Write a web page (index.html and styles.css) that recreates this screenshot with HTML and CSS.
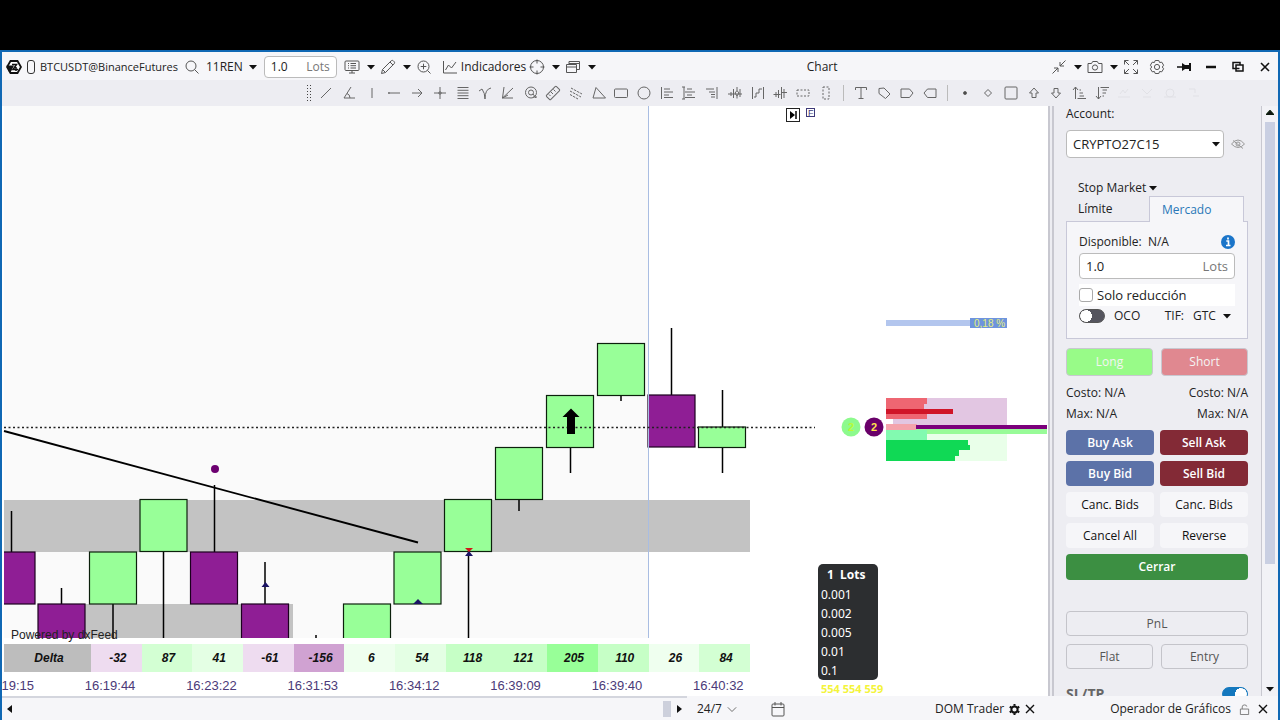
FILE: index.html
```html
<!DOCTYPE html>
<html lang="es">
<head>
  <meta charset="UTF-8" />
  <meta name="viewport" content="width=device-width, initial-scale=1" />
  <title>Chart - BTCUSDT@BinanceFutures</title>
  <link rel="stylesheet" href="styles.css">
</head>
<body>
  <svg class="defs" aria-hidden="true">
    <symbol id="caret" viewBox="0 0 8 5"><path d="M0 0h8L4 4.6z" fill="#111"/></symbol>
    <symbol id="close" viewBox="0 0 10 10"><path d="M1 1l8 8M9 1l-8 8" fill="none" stroke="#111" stroke-width="1.4"/></symbol>
  </svg>

  <div class="window">
    <header class="titlebar">
      <svg class="logo" viewBox="0 0 16 16"><path d="M4.500 2h7L15 8l-3.500 6h-7L1 8z" fill="#fff" stroke="#111" stroke-width="1.800"/><path d="M.5 6.500H8L4.500 13.500 3 13z" fill="#111"/><path d="M6 5.500h4.500L7 10.500h5M10 8v4" fill="none" stroke="#111" stroke-width="1.500"/></svg>
      <span class="link-pill"></span>
      <span class="symbol">BTCUSDT@BinanceFutures</span>
      <button class="icon-btn search" aria-label="Buscar"><svg viewBox="0 0 16 16"><circle cx="7" cy="7" r="5"/><path d="M10.500 10.500l4 4"/></svg></button>
      <button class="text-btn frame">11REN <svg class="caret"><use href="#caret"/></svg></button>
      <label class="lots-top"><input type="text" value="1.0" aria-label="Cantidad"><span>Lots</span></label>
      <div class="menus">
        <button class="icon-btn" aria-label="Plantillas"><svg viewBox="0 0 16 16"><rect x="1" y="2" width="14" height="9.500" rx="1"/><path d="M4 4.500h1M6.500 4.500H12M4 6.700h1M6.500 6.700H12M4 9h1M6.500 9H12M8 11.500V14M5 14h6"/></svg></button>
        <svg class="caret"><use href="#caret"/></svg>
        <button class="icon-btn" aria-label="Dibujo"><svg viewBox="0 0 16 16"><path d="M1.500 14.500l1-4L11.300 1.700q1-.8 2 .1l.9.9q.9 1 0 2L5.500 13.500zM10 3l3 3M2.500 10.500l3 3"/></svg></button>
        <svg class="caret"><use href="#caret"/></svg>
        <button class="icon-btn" aria-label="Ampliar"><svg viewBox="0 0 16 16"><circle cx="7.500" cy="7.500" r="5.500"/><path d="M11.500 11.500l3 3M4.700 7.500h5.600M7.500 4.700v5.600"/></svg></button>
      </div>
      <button class="text-btn indicators"><svg class="ico" viewBox="0 0 16 16"><path d="M1.500 2v12H15M3.500 11l3-5 3 3 4.500-6"/></svg>Indicadores</button>
      <div class="menus">
        <button class="icon-btn" aria-label="Objetivo"><svg viewBox="0 0 16 16"><circle cx="8" cy="8" r="6.500"/><path d="M8 .5v4M8 11.500v4M.5 8h4M11.500 8h4"/></svg></button>
        <svg class="caret"><use href="#caret"/></svg>
        <button class="icon-btn" aria-label="Ventanas"><svg viewBox="0 0 16 16"><path d="M1.500 5.500h10v8h-10zM1.500 8h10M4 5.500v-3h10.500v8h-3M4 4.500h10.500"/></svg></button>
        <svg class="caret"><use href="#caret"/></svg>
      </div>
      <h1 class="title">Chart</h1>
      <div class="menus">
        <button class="icon-btn" aria-label="Contraer"><svg viewBox="0 0 16 16"><path d="M14.500 1.500L9 7M9 3v4h4M1.500 14.500L7 9M3 9h4v4"/></svg></button>
        <svg class="caret"><use href="#caret"/></svg>
        <button class="icon-btn" aria-label="Captura"><svg viewBox="0 0 16 16"><path d="M1 4.500h3.500l1.200-2h4.600l1.200 2H15v9H1z"/><circle cx="8" cy="8.500" r="2.600"/></svg></button>
        <svg class="caret"><use href="#caret"/></svg>
        <button class="icon-btn" aria-label="Pantalla completa"><svg viewBox="0 0 16 16"><path d="M1.500 5.500v-4h4M1.500 1.500L6 6M10.500 1.500h4v4M14.500 1.500L10 6M1.500 10.500v4h4M1.500 14.500L6 10M10.500 14.500h4v-4M14.500 14.500L10 10"/></svg></button>
      </div>
      <div class="window-btns">
        <button class="icon-btn" aria-label="Ajustes"><svg viewBox="0 0 16 16"><path d="M6.200 1.500h3.600l.8 2 2.200-.3 1.800 3L13.300 8l1.300 1.800-1.800 3-2.200-.3-.8 2H6.200l-.8-2-2.200.3-1.800-3L2.700 8 1.400 6.200l1.800-3 2.200.3z"/><circle cx="8" cy="8" r="2.600"/></svg></button>
        <button class="icon-btn" aria-label="Fijar"><svg viewBox="0 0 16 16"><path d="M1 8h6" stroke="#111" stroke-width="1.500"/><path d="M6 4v8l3-2h4v2h2V4h-2v2H9z" fill="#111" stroke="none"/></svg></button>
        <button class="icon-btn" aria-label="Minimizar"><svg viewBox="0 0 16 16"><path d="M3 8h10" stroke="#111" stroke-width="2.500"/></svg></button>
        <button class="icon-btn" aria-label="Restaurar"><svg viewBox="0 0 16 16"><path d="M6 6h7v6H6zM9.500 9.500H3v-6h7V6" stroke="#111" stroke-width="1.500"/></svg></button>
        <button class="icon-btn" aria-label="Cerrar"><svg viewBox="0 0 16 16"><path d="M4 4l8 8M12 4l-8 8" stroke="#111" stroke-width="1.600"/></svg></button>
      </div>
    </header>

    <nav class="tools" aria-label="Herramientas de dibujo">
      <span class="grip"></span>
      <div class="tool-group lines">
        <button aria-label="Línea"><svg viewBox="0 0 16 16"><path d="M3 13L13 3"/></svg></button>
        <button aria-label="Ángulo"><svg viewBox="0 0 16 16"><path d="M10 2L3 13h11M6 8.500q3 1 3 4.500"/></svg></button>
        <button aria-label="Vertical"><svg viewBox="0 0 16 16"><path d="M8 3v10"/></svg></button>
        <button aria-label="Horizontal"><svg viewBox="0 0 16 16"><path d="M2 8h12M3 7v2"/></svg></button>
        <button aria-label="Rayo"><svg viewBox="0 0 16 16"><path d="M3 8h10M9 4l4 4-4 4"/></svg></button>
        <button aria-label="Cruz"><svg viewBox="0 0 16 16"><path d="M2 8h12M8 2v12M6.500 8L8 6.500 9.500 8 8 9.500z"/></svg></button>
        <button aria-label="Fibonacci"><svg viewBox="0 0 16 16"><path d="M2.500 2.500h11M2.500 5.300h11M2.500 8h11M2.500 10.700h11M2.500 13.500h11"/></svg></button>
        <button aria-label="Curva"><svg viewBox="0 0 16 16"><path d="M2 6l3-2q3 4 3 10Q8 4 14 3"/></svg></button>
        <button aria-label="Abanico"><svg viewBox="0 0 16 16"><path d="M4 2L2.500 13H13M2.500 13L13 3M2.500 13L8 10"/></svg></button>
        <button aria-label="Espiral"><svg viewBox="0 0 16 16"><circle cx="8" cy="7.500" r="5.500"/><circle cx="8" cy="7.500" r="2.500"/><path d="M10 12h4M10 9l3 4"/></svg></button>
        <button aria-label="Regla"><svg viewBox="0 0 16 16"><rect x="5" y="1" width="6" height="14" rx="1" transform="rotate(45 8 8)"/><path d="M6 7l2 2M8.500 4.500l2 2M4 9.500l1.500 1.500"/></svg></button>
        <button aria-label="Canal"><svg viewBox="0 0 16 16"><path d="M3 3l11 6M2 6l11 6M2 9.500l8 4.500" stroke-dasharray="2.500 1"/></svg></button>
        <button aria-label="Triángulo"><svg viewBox="0 0 16 16"><path d="M5 2.500L2 13h12.500z"/></svg></button>
        <button aria-label="Rectángulo"><svg viewBox="0 0 16 16"><rect x="1.500" y="4" width="13" height="8.500" rx="1"/></svg></button>
        <button aria-label="Elipse"><svg viewBox="0 0 16 16"><circle cx="8" cy="8" r="6"/></svg></button>
        <button aria-label="Perfil izquierdo"><svg viewBox="0 0 16 16"><path d="M2.500 2v12M5 4h6M5 7h9M5 10h5M5 12.500h9"/></svg></button>
        <button aria-label="Perfil medio"><svg viewBox="0 0 16 16"><path d="M3 2v12M1 2h3M1 14h3M6 4h5M4 7h10M6 10h5M4 12.500h10"/></svg></button>
        <button aria-label="Perfil derecho"><svg viewBox="0 0 16 16"><path d="M13 2v12M2 4h8M5 7h6M7 9.500h4M7 12h4"/></svg></button>
        <button aria-label="Velas"><svg viewBox="0 0 16 16"><path d="M1 9h14M4 7v4M6.500 4v9M10 2v3.500M10 11v2.500M10 5.500L8 8l2 3 2-3zM13 4v8"/></svg></button>
        <button aria-label="Escalera"><svg viewBox="0 0 16 16"><path d="M2.500 2v12M13.500 2v12M4 12h2V8h3V4h3"/></svg></button>
        <button aria-label="Delta"><svg viewBox="0 0 16 16"><path d="M1.500 9.500h7M4 7v5M6.500 5v8M9.500 2v12M12 4v9M9.500 7.500H15"/></svg></button>
        <button aria-label="Zona horizontal"><svg viewBox="0 0 16 16"><rect x="2" y="5" width="12" height="6" stroke-dasharray="2 1.500"/></svg></button>
        <button aria-label="Zona vertical"><svg viewBox="0 0 16 16"><rect x="5" y="2" width="6" height="12" stroke-dasharray="2 1.500"/></svg></button>
      </div>
      <span class="sep"></span>
      <div class="tool-group labels">
        <button aria-label="Texto"><svg viewBox="0 0 16 16"><path d="M2.500 5V2.500h11V5M8 2.500v11M5.500 13.500h5"/></svg></button>
        <button aria-label="Etiqueta"><svg viewBox="0 0 16 16"><path d="M3 3.500l5-.5 6 6-4.500 4.500L3 8.500z"/></svg></button>
        <button aria-label="Etiqueta derecha"><svg viewBox="0 0 16 16"><path d="M2 4h8.500L14 8l-3.500 4.500H2z"/></svg></button>
        <button aria-label="Etiqueta izquierda"><svg viewBox="0 0 16 16"><path d="M14 4H5.500L2 8l3.500 4.500H14z"/></svg></button>
      </div>
      <span class="sep"></span>
      <div class="tool-group marks">
        <button aria-label="Punto"><svg viewBox="0 0 16 16"><circle cx="8" cy="8" r="1.500" fill="#444"/></svg></button>
        <button aria-label="Rombo"><svg viewBox="0 0 16 16"><path d="M8 4.500L11.500 8 8 11.500 4.500 8z"/></svg></button>
        <button aria-label="Cuadrado"><svg viewBox="0 0 16 16"><rect x="2" y="2" width="12" height="12" rx="1"/></svg></button>
        <button aria-label="Flecha arriba"><svg viewBox="0 0 16 16"><path d="M8 3l4.500 5H10v4.500H6V8H3.500z"/></svg></button>
        <button aria-label="Flecha abajo"><svg viewBox="0 0 16 16"><path d="M8 13l4.500-5H10V3.500H6V8H3.500z"/></svg></button>
        <button aria-label="Orden ascendente"><svg viewBox="0 0 16 16"><path d="M4.500 14V2M2 5l2.500-3L7 5M8.500 5H10M8.500 8H12M8.500 11H13M6.500 13.500H15"/></svg></button>
        <button aria-label="Orden descendente"><svg viewBox="0 0 16 16"><path d="M4.500 2v12M2 11l2.500 3L7 11M6.500 2.500H15M8.500 5H13M8.500 8H12M8.500 11H10"/></svg></button>
        <button disabled aria-label="Cortar"><svg viewBox="0 0 16 16"><path d="M2 12h12M4 9l3-4 2 3 3-4"/></svg></button>
        <button disabled aria-label="Copiar"><svg viewBox="0 0 16 16"><path d="M3 4l5 5 5-5M4 12h8"/></svg></button>
        <button disabled aria-label="Ocultar"><svg viewBox="0 0 16 16"><circle cx="8" cy="8" r="4"/><path d="M2 12h12"/></svg></button>
        <button disabled aria-label="Borrar"><svg viewBox="0 0 16 16"><path d="M4 4h6v4M8 11h6"/></svg></button>
      </div>
    </nav>

    <main class="workspace">
      <section class="chart" aria-label="Gráfico">
        <svg class="plot" viewBox="2 106 1046 532" preserveAspectRatio="xMinYMin meet">
          <defs><clipPath id="area"><rect x="2" y="106" width="1046" height="532"/></clipPath></defs>
          <rect x="2" y="106" width="646" height="532" fill="#fafafa"/>
          <g clip-path="url(#area)">
            <!-- zones -->
            <rect x="4" y="500" width="746" height="52" fill="#c3c3c3"/>
            <rect x="40" y="604" width="253" height="40" fill="#c3c3c3"/>
            <!-- wicks -->
            <path class="wick" d="M11.500 511v41M61.500 588v16M113 604v40M163.500 552v92M214.500 485v67M265 562v42M316 635v9M468.500 552v92M519 499v12M570.500 447v26M621 395v6M671.500 328v67M722.500 390v83"/>
            <!-- candles -->
            <g class="down">
              <rect x="-12" y="552" width="47" height="52"/>
              <rect x="38" y="604" width="47" height="52"/>
              <rect x="190.500" y="552" width="47" height="52"/>
              <rect x="241.500" y="604" width="47" height="52"/>
              <rect x="648" y="395" width="47" height="52"/>
            </g>
            <g class="up">
              <rect x="89.500" y="552" width="47" height="52"/>
              <rect x="140" y="499.500" width="47" height="52"/>
              <rect x="343.500" y="604" width="47" height="52"/>
              <rect x="394" y="552" width="47" height="52"/>
              <rect x="444.500" y="499.500" width="47" height="52"/>
              <rect x="495.500" y="447.500" width="47" height="52"/>
              <rect x="546.500" y="395.500" width="47" height="52"/>
              <rect x="597.500" y="343.500" width="47" height="52"/>
              <rect x="698.500" y="427" width="47" height="20.500"/>
            </g>
            <rect x="2" y="106" width="2" height="532" fill="#fff"/>
            <path d="M648.500 106v532" stroke="#a9bde2"/>
            <path d="M4 431L418 542.500" stroke="#000" stroke-width="1.900"/>
            <circle cx="215" cy="469" r="4" fill="#6c0070"/>
            <path d="M4 427.500h811" stroke="#222" stroke-width="1.300" stroke-dasharray="2 2.500"/>
            <path d="M571 408.500l8.500 8.500h-4.500v17h-8v-17h-4.500z" fill="#000"/>
            <path d="M265.500 582l4 5h-8zM418 599l5 5h-10zM469 551l4 5h-8z" fill="#1b1464"/>
            <path d="M465 548h8l-4 4z" fill="#d01818"/>
          </g>
          <!-- go to last bar -->
          <rect x="786.500" y="108.500" width="13" height="13" fill="#fff" stroke="#222"/>
          <path d="M790 111v8l5-4z" fill="#000"/><path d="M796 111v8" stroke="#000" stroke-width="1.500"/>
          <rect x="806.500" y="108.500" width="8" height="8" fill="#fff" stroke="#3f3a78"/>
          <text x="808" y="116" font-size="9" fill="#3f3a78">F</text>
          <!-- market depth -->
          <rect x="886" y="320" width="84" height="6" fill="#b3c6ee"/>
          <rect x="970" y="318" width="37" height="10" fill="#6e94dd"/>
          <text x="974" y="327" font-size="10" fill="#e4f07a">0,18 %</text>
          <rect x="886" y="398" width="121" height="31" fill="#e2c6e2"/>
          <rect x="886" y="430" width="121" height="31" fill="#e9ffe9"/>
          <path d="M886 398h41v6h-3v5h3v10h-41z" fill="#ee6672"/>
          <rect x="886" y="409" width="67" height="5" fill="#d01528"/>
          <rect x="886" y="419" width="7" height="5" fill="#fff"/>
          <rect x="886" y="424" width="31" height="6" fill="#f4a3ab"/>
          <rect x="916" y="425" width="131" height="4" fill="#7b007b"/>
          <rect x="916" y="429" width="131" height="5" fill="#98fb98"/>
          <rect x="886" y="430" width="41" height="10" fill="#82fab0"/>
          <path d="M886 440h82v5h2v5h-11v6h-4v5h-69z" fill="#10d955"/>
          <circle cx="851" cy="427" r="9.500" fill="#8dfa8d"/>
          <circle cx="874" cy="427" r="9.500" fill="#690069"/>
          <text class="badge" x="851" y="431" fill="#b8fa38">2</text>
          <text class="badge" x="874" y="431" fill="#ffe34d">2</text>
          <text x="11" y="639" font-size="12" fill="#222">Powered by dxFeed</text>
        </svg>

        <table class="delta">
          <tr>
            <th>Delta</th>
            <td class="n1">-32</td><td class="p3">87</td><td class="p2">41</td><td class="n1">-61</td>
            <td class="n2">-156</td><td class="p1">6</td><td class="p2">54</td><td class="p4">118</td>
            <td class="p4">121</td><td class="p5">205</td><td class="p4">110</td><td class="p1">26</td><td class="p3">84</td>
          </tr>
        </table>
        <div class="times">
          <div class="times-row">
            <span>16:19:15</span><span>16:19:44</span><span>16:23:22</span><span>16:31:53</span>
            <span>16:34:12</span><span>16:39:09</span><span>16:39:40</span><span>16:40:32</span>
          </div>
        </div>

        <div class="lots-menu">
          <strong>1 &nbsp;Lots</strong>
          <button>0.001</button>
          <button>0.002</button>
          <button>0.005</button>
          <button>0.01</button>
          <button>0.1</button>
          <span class="dom-nums">554 554 559</span>
        </div>
      </section>

      <aside class="trader">
        <label class="account-label" for="account">Account:</label>
        <div class="account">
          <span class="select-wrap"><select id="account"><option>CRYPTO27C15</option></select><svg class="caret"><use href="#caret"/></svg></span>
          <button class="icon-btn eye" aria-label="Ocultar cuenta"><svg viewBox="0 0 16 16"><path d="M1.500 8Q8 0 14.500 8 8 15 1.500 8zM3 4.500l10 8"/><circle cx="8" cy="8" r="2"/></svg></button>
        </div>

        <button class="stop-type">Stop Market <svg class="caret"><use href="#caret"/></svg></button>
        <div class="tabs">
          <button>Límite</button>
          <button class="active">Mercado</button>
        </div>
        <div class="order-box">
          <div class="line available"><span>Disponible: &nbsp;N/A</span><svg class="info" viewBox="0 0 14 14"><circle cx="7" cy="7" r="7" fill="#1b75c9"/><path d="M7 2.500v2M5.300 6H7.500v4.500M5 10.500h4.500" stroke="#fff" stroke-width="1.700" fill="none"/></svg></div>
          <label class="lots-box"><input type="text" value="1.0" aria-label="Lots"><span>Lots</span></label>
          <label class="reduce"><input type="checkbox">Solo reducción</label>
          <div class="line options">
            <label class="oco"><input class="switch" type="checkbox">OCO</label>
            <label class="tif">TIF: <span class="select-wrap"><select><option>GTC</option></select><svg class="caret"><use href="#caret"/></svg></span></label>
          </div>
        </div>

        <div class="pair wide">
          <button class="btn long">Long</button>
          <button class="btn short">Short</button>
        </div>
        <div class="line costs"><span>Costo: N/A</span><span>Costo: N/A</span></div>
        <div class="line costs"><span>Max: N/A</span><span>Max: N/A</span></div>
        <div class="pair actions">
          <button class="btn buy">Buy Ask</button>
          <button class="btn sell">Sell Ask</button>
          <button class="btn buy">Buy Bid</button>
          <button class="btn sell">Sell Bid</button>
          <button class="btn plain">Canc. Bids</button>
          <button class="btn plain">Canc. Bids</button>
          <button class="btn plain">Cancel All</button>
          <button class="btn plain">Reverse</button>
        </div>
        <button class="btn close-all">Cerrar</button>

        <div class="pair wide position">
          <button class="btn outline pnl">PnL</button>
          <button class="btn outline">Flat</button>
          <button class="btn outline">Entry</button>
        </div>
        <label class="line sltp"><span>SL/TP</span><input class="switch" type="checkbox" checked></label>
      </aside>

      <div class="scrollbar">
        <svg class="caret up"><use href="#caret"/></svg>
        <span class="thumb"></span>
        <svg class="caret"><use href="#caret"/></svg>
      </div>
    </main>

    <footer class="status">
      <div class="hscroll">
        <svg class="arrow" viewBox="0 0 5 8"><path d="M5 0v8L0 4z"/></svg>
        <span class="hthumb"></span>
        <svg class="arrow" viewBox="0 0 5 8"><path d="M0 0v8l5-4z"/></svg>
      </div>
      <button class="text-btn session">24/7 <svg class="ico" viewBox="0 0 12 12"><path d="M1 4l5 5 5-5"/></svg></button>
      <button class="icon-btn calendar" aria-label="Calendario"><svg viewBox="0 0 16 16"><rect x="2" y="3" width="12" height="12" rx="1"/><path d="M2 6.500h12M5 1v3.500M11 1v3.500"/></svg></button>
      <div class="dock dom">DOM Trader
        <svg class="gear" viewBox="0 0 12 12"><circle cx="6" cy="6" r="3.400" fill="none" stroke="#111" stroke-width="2.200"/><path d="M6 0v2M6 10v2M.8 3l1.800 1M9.400 8l1.800 1M.8 9l1.800-1M9.400 4l1.800-1" stroke="#111" stroke-width="2.200"/></svg>
        <button class="icon-btn small" aria-label="Cerrar DOM"><svg><use href="#close"/></svg></button>
      </div>
      <div class="dock operator">Operador de Gráficos
        <svg class="lock" viewBox="0 0 12 12"><path d="M1.500 5.500h9v6h-9zM3.500 5.500V3.200q0-2.200 2.500-2.200t2.500 1.800" fill="none" stroke="#777"/></svg>
        <button class="icon-btn small" aria-label="Cerrar panel"><svg><use href="#close"/></svg></button>
      </div>
    </footer>
  </div>
</body>
</html>
```

FILE: styles.css
```css
* { box-sizing: border-box; }
body {
  margin: 0;
  height: 100vh;
  padding-top: 50px;
  background: #000;
  color: #222;
  font: 12px/16px "Open Sans", "Segoe UI", sans-serif;
  display: flex;
  flex-direction: column;
  overflow: hidden;
}
button, input, select {
  font: inherit;
  color: inherit;
  background: none;
  border: none;
  padding: 0;
  margin: 0;
}
button { cursor: pointer; }
.defs { display: none; }
.window {
  flex: 1;
  min-height: 0;
  display: flex;
  flex-direction: column;
  border: 2px solid #1068b4;
  border-bottom: none;
  background: #f6f6f9;
}
.caret { width: 8px; height: 5px; flex: none; }

/* title bar */
.titlebar {
  height: 28px;
  flex: none;
  display: flex;
  align-items: center;
  padding: 2px 5px 0 4px;
}
.icon-btn {
  width: 16px;
  height: 16px;
  flex: none;
  display: flex;
}
.icon-btn svg, .ico {
  width: 16px;
  height: 16px;
  fill: none;
  stroke: #555;
  stroke-width: 1;
}
.logo { width: 16px; height: 16px; }
.link-pill {
  width: 8px;
  height: 14px;
  margin: 0 5px;
  border: 1px solid #333;
  border-radius: 3px;
}
.symbol { font-size: 11px; }
.search { margin: 0 6px; }
.text-btn { display: flex; align-items: center; }
.frame { gap: 6px; }
.lots-top {
  width: 73px;
  height: 22px;
  margin: 0 7px;
  padding: 0 6px;
  display: flex;
  align-items: center;
  justify-content: space-between;
  background: #fff;
  border: 1px solid #bbb;
  border-radius: 4px;
}
.lots-top input { width: 30px; }
.lots-top span, .lots-box span { color: #777; }
.menus { display: flex; align-items: center; }
.menus .caret { margin: 0 5px 0 7px; }
.indicators { margin: 0 3px 0 5px; gap: 3px; }
.menus + .indicators { margin-left: 10px; }
.title {
  flex: 1;
  margin: 0;
  padding-right: 8px;
  font-size: 12px;
  font-weight: 400;
  text-align: center;
}
.window-btns { display: flex; gap: 11px; margin-left: 10px; }

/* drawing tools */
.tools {
  height: 26px;
  flex: none;
  display: flex;
  align-items: center;
  padding-left: 304px;
  background: #ededf2;
}
.grip {
  width: 6px;
  height: 18px;
  margin-right: 3px;
  background: radial-gradient(circle, #444 1px, transparent 1px) 0 0 / 3px 3px;
}
.tool-group {
  display: grid;
  grid-auto-flow: column;
  grid-auto-columns: 1fr;
}
.lines { width: 522px; }
.labels { width: 91px; }
.marks { width: 250px; }
.tool-group button { display: flex; justify-content: center; }
.tool-group svg {
  width: 16px;
  height: 16px;
  fill: none;
  stroke: #666;
}
.tool-group button:disabled { opacity: .08; }
.sep { width: 1px; height: 16px; margin: 0 6px; background: #bbb; }

/* chart */
.workspace { flex: 1; min-height: 0; display: flex; }
.chart {
  flex: 1;
  min-width: 0;
  position: relative;
  display: flex;
  flex-direction: column;
  background: #fff;
  font-family: "Liberation Sans", Arial, sans-serif;
}
.plot {
  width: 100%;
  flex: 1;
  min-height: 0;
  overflow: visible;
}
.wick { stroke: #000; stroke-width: 1.5; }
.down { fill: #8f1e95; stroke: #1c001e; stroke-width: 1.2; }
.up { fill: #98ff98; stroke: #0c200c; stroke-width: 1.2; }
.badge { font-size: 11px; font-weight: 700; text-anchor: middle; }
.delta {
  width: 746px;
  height: 28px;
  margin: 6px 0 0 2px;
  table-layout: fixed;
  border-collapse: collapse;
  font-style: italic;
  font-weight: 700;
  color: #111;
}
.delta td, .delta th { padding: 0 0 0 3px; text-align: center; }
.delta th { width: 87px; background: #bdbdbd; }
.n1 { background: #eedcf0; }
.n2 { background: #d0a2d2; }
.p1 { background: #efffef; }
.p2 { background: #e4ffe4; }
.p3 { background: #d3ffd3; }
.p4 { background: #c6ffc6; }
.p5 { background: #98ff98; }
.times { height: 24px; overflow: hidden; }
.times-row {
  width: 811px;
  margin-left: -44px;
  display: grid;
  grid-template-columns: repeat(8, 1fr);
  line-height: 28px;
  font-size: 13px;
  text-align: center;
  color: #4b3a78;
}
.lots-menu {
  position: absolute;
  left: 816px;
  bottom: 16px;
  width: 60px;
  height: 116px;
  padding-left: 3px;
  display: flex;
  flex-direction: column;
  border-radius: 5px;
  background: #2c2e30;
  color: #fff;
  font: 12px/19px "Noto Sans", "Segoe UI", sans-serif;
}
.lots-menu strong { padding-left: 6px; line-height: 21px; }
.lots-menu button { height: 19px; flex: none; text-align: left; }
.dom-nums {
  color: #f4f43a;
  font-size: 11px;
  font-weight: 700;
  line-height: 18px;
  white-space: nowrap;
}

/* order panel */
.trader {
  width: 214px;
  flex: none;
  padding: 0 13px 0 12px;
  overflow: hidden;
  background: #ededf2;
  border-left: 6px double #c8c8d0;
  border-right: 1px solid #c8c8d0;
}
.account-label { display: block; height: 24px; line-height: 15px; }
.account { display: flex; align-items: center; gap: 6px; }
.eye svg { stroke: #999; }
.select-wrap { position: relative; display: flex; align-items: center; }
.select-wrap select { appearance: none; width: 100%; }
.select-wrap .caret { position: absolute; right: 4px; pointer-events: none; }
.account .select-wrap { width: 158px; }
.account select {
  height: 28px;
  padding: 0 6px;
  font-size: 13px;
  background: #fff;
  border: 1px solid #bbb;
  border-radius: 4px;
}
.stop-type {
  display: flex;
  align-items: center;
  gap: 3px;
  margin: 22px 0 0 12px;
}
.tabs { display: flex; position: relative; padding-right: 4px; height: 25px; }
.tabs button {
  width: 83px;
  padding-left: 12px;
  text-align: left;
}
.tabs .active {
  flex: 1;
  margin-bottom: -1px;
  color: #2a78b8;
  background: #f6f6f9;
  border: 1px solid #c8c8d8;
  border-bottom: none;
}
.order-box {
  height: 118px;
  padding: 12px 12px 0;
  background: #f6f6f9;
  border: 1px solid #c8c8d8;
}
.line { display: flex; justify-content: space-between; align-items: center; }
.info { width: 14px; height: 14px; }
.lots-box {
  height: 26px;
  margin-top: 3px;
  padding: 0 6px;
  display: flex;
  align-items: center;
  justify-content: space-between;
  font-size: 13px;
  background: #fff;
  border: 1px solid #bbb;
  border-radius: 4px;
}
.lots-box input { width: 80px; }
.reduce {
  height: 22px;
  margin-top: 5px;
  display: flex;
  align-items: center;
  gap: 4px;
  font-size: 13px;
  background: #fff;
}
.reduce input {
  appearance: none;
  width: 14px;
  height: 14px;
  border: 1px solid #aaa;
  border-radius: 3px;
}
.options { height: 20px; }
.oco, .tif { display: flex; align-items: center; gap: 9px; }
.tif select { width: 42px; }
.switch {
  appearance: none;
  width: 26px;
  height: 14px;
  border-radius: 7px;
  border: 1px solid #555;
  background: radial-gradient(circle at 6px 6px, #fff 6px, #55555f 6px);
}
.switch:checked {
  border-color: #1478be;
  background: radial-gradient(circle at 18px 6px, #fff 6px, #1478be 6px);
}
.pair {
  display: grid;
  grid-template-columns: 1fr 1fr;
  gap: 6px;
}
.wide { column-gap: 8px; margin-top: 9px; }
.btn { height: 25px; border-radius: 4px; }
.long, .short { height: 28px; color: #f4f4f4; border: 1px solid #c8c8d0; }
.long { background: #98fb88; }
.short { background: #e08890; }
.costs { height: 21px; }
.wide + .costs { margin-top: 6px; }
.actions { margin-top: 6px; }
.buy, .sell, .close-all { color: #fff; font-weight: 600; }
.buy { background: #5c72a8; }
.sell { background: #832a36; }
.plain { background: #f6f6f9; color: #111; font-weight: 500; }
.close-all { width: 100%; height: 26px; margin-top: 6px; background: #3c8f42; }
.position { margin-top: 31px; row-gap: 8px; }
.outline { border: 1px solid #c4c4ca; color: #555; }
.pnl { grid-column: 1 / 3; }
.sltp { margin-top: 17px; color: #666; font-size: 14px; font-weight: 700; }

.scrollbar {
  width: 16px;
  flex: none;
  padding: 4px 0;
  display: flex;
  flex-direction: column;
  align-items: center;
  background: #f2f2f6;
}
.scrollbar .up { transform: rotate(180deg); }
.thumb {
  width: 10px;
  height: 442px;
  margin: 7px 0 auto;
  background: #c9cfe2;
}

/* status bar */
.status {
  height: 24px;
  flex: none;
  display: flex;
  align-items: center;
  padding: 2px 10px 0 0;
}
.hscroll {
  width: 685px;
  height: 22px;
  display: flex;
  align-items: center;
  gap: 6px;
  padding: 0 5px;
  box-shadow: 0 -2px #d4d6de;
}
.arrow { width: 5px; height: 8px; fill: #111; }
.hthumb { width: 8px; height: 16px; margin-left: auto; background: #cdd0dc; }
.session { margin-left: 10px; gap: 5px; }
.session .ico { width: 10px; height: 10px; }
.calendar { margin-left: 33px; }
.dock { display: flex; align-items: center; gap: 5px; }
.operator { gap: 8px; }
.dom { margin-left: auto; margin-right: 75px; }
.gear, .lock { width: 11px; height: 11px; }
.small, .small svg { width: 10px; height: 10px; }
```
